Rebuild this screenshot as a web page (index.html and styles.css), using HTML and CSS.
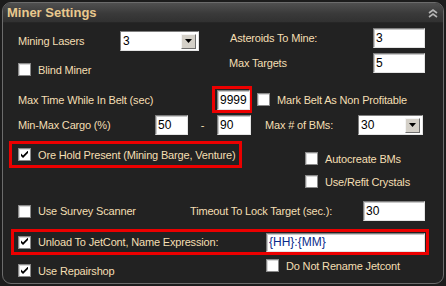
FILE: index.html
```html
<!DOCTYPE html>
<html>

<head>
    <meta charset="utf-8" />
    <title>Miner Settings</title>
    <link rel="stylesheet" href="styles.css">
</head>

<body>
    <div class="panel">
        <div class="head">
            <span class="title">Miner Settings</span>
            <svg class="collapse" width="10" height="9" viewBox="0 0 10 9">
                <path d="M1 4 L5 1 L9 4 M1 8 L5 5 L9 8" fill="none" stroke="#b4b4b4" stroke-width="1.6" />
            </svg>
        </div>

        <div class="top">
            <div class="col-left">
                <div class="row h20">
                    <span class="lbl w-lasers">Mining Lasers</span>
                    <div class="select w-lasers-sel"><span class="val">3</span><span class="drop"></span></div>
                </div>
                <div class="row h17 blind">
                    <span class="box"></span><span class="lbl gap">Blind Miner</span>
                </div>
            </div>
            <div class="col-right">
                <div class="row h19">
                    <span class="lbl w-ast">Asteroids To Mine:</span>
                    <input class="txt w52" value="3">
                </div>
                <div class="row h18 targets">
                    <span class="lbl w-tgt">Max Targets</span>
                    <input class="txt w52" value="5">
                </div>
            </div>
        </div>

        <div class="row maxtime">
            <span class="lbl w-maxtime">Max Time While In Belt (sec)</span>
            <div class="red red-small"><input class="txt w32" value="9999"></div>
            <span class="box mark-box"></span><span class="lbl gap">Mark Belt As Non Profitable</span>
        </div>

        <div class="row cargo">
            <span class="lbl w-cargo">Min-Max Cargo (%)</span>
            <input class="txt w32" value="50">
            <span class="lbl dash">-</span>
            <input class="txt w34" value="90">
            <span class="lbl w-bms">Max # of BMs:</span>
            <div class="select w-bms-sel"><span class="val">30</span><span class="drop"></span></div>
        </div>

        <div class="ore">
            <div class="red red-ore">
                <span class="box checked"></span><span class="lbl gap">Ore Hold Present (Mining Barge, Venture)</span>
            </div>
            <div class="ore-right">
                <div class="row h13"><span class="box"></span><span class="lbl gap">Autocreate BMs</span></div>
                <div class="row h13 refit"><span class="box"></span><span class="lbl gap">Use/Refit Crystals</span></div>
            </div>
        </div>

        <div class="row survey">
            <div class="row w-check-survey"><span class="box"></span><span class="lbl gap">Use Survey Scanner</span></div>
            <span class="lbl w-timeout">Timeout To Lock Target (sec.):</span>
            <input class="txt w62" value="30">
        </div>

        <div class="red red-unload">
            <div class="row w-check-unload"><span class="box checked"></span><span class="lbl gap">Unload To JetCont, Name Expression:</span></div>
            <input class="txt w159 blue" value="{HH}:{MM}">
        </div>

        <div class="row last">
            <div class="row w-check-unload repair"><span class="box checked"></span><span class="lbl gap">Use Repairshop</span></div>
            <div class="row rename"><span class="box"></span><span class="lbl gap">Do Not Rename Jetcont</span></div>
        </div>
    </div>
</body>

</html>
```

FILE: styles.css
```css
/* Khung chung */
body {
    margin: 0;
    background-color: #1c1c1c;
    font-family: "Liberation Sans", Arial, sans-serif;
    font-size: 11px;
}

.panel {
    margin: 2px 0 0 2px;
    width: 440px;
    height: 280px;
    border: 1px solid #6c6c6c;
    border-radius: 9px;
    background-color: #222222;
    overflow: hidden;
}

/* Thanh tiêu đề */
.head {
    height: 19px;
    display: flex;
    align-items: center;
    justify-content: space-between;
    padding: 0 5px 0 4px;
    background: linear-gradient(#505050, #3a3a3a 55%, #313131);
    border-bottom: 1px solid #262626;
}

.title {
    color: #e9c98e;
    font-weight: bold;
    font-size: 13px;
}

.collapse {
    margin-top: 1px;
}

/* Hàng và nhãn */
.row {
    display: flex;
    align-items: center;
}

.lbl {
    color: #f4dfb3;
    white-space: nowrap;
    letter-spacing: -0.17px;
}

.gap {
    margin-left: 7px;
}

.h20 { height: 20px; }
.h19 { height: 19px; }
.h18 { height: 18px; }
.h17 { height: 17px; }
.h13 { height: 13px; }

/* Ô checkbox */
.box {
    width: 11px;
    height: 11px;
    flex: none;
    background-color: #fff;
    border: 1px solid #8a8a8a;
    box-shadow: inset 1px 1px 0 #d8d8d8;
    position: relative;
}

.box.checked::after {
    content: "";
    position: absolute;
    left: 2px;
    top: 1px;
    width: 7px;
    height: 8px;
    background: url("data:image/svg+xml;utf8,<svg xmlns='http://www.w3.org/2000/svg' width='7' height='7' viewBox='0 0 7 7'><path d='M0 2.5 L0 5 L2 7 L7 2 L7 -0.5 L2 4.5 Z' fill='black'/></svg>") no-repeat center;
}

/* Ô nhập */
.txt {
    box-sizing: border-box;
    height: 20px;
    margin: 0;
    padding: 0 0 0 2px;
    border: 1px solid;
    border-color: #7e7e7e #e4e4e4 #e4e4e4 #7e7e7e;
    box-shadow: inset 1px 1px 0 #c8c8c8;
    background-color: #fff;
    color: #000;
    font-family: "Liberation Sans", Arial, sans-serif;
    font-size: 12px;
    outline: none;
}

.blue { color: #0a2a8a; }

.w32 { width: 33px; }
.w34 { width: 34px; }
.w52 { width: 52px; }
.w62 { width: 62px; }
.w159 { width: 159px; height: 19px; }

/* Hộp chọn */
.select {
    box-sizing: border-box;
    height: 20px;
    display: flex;
    align-items: center;
    justify-content: space-between;
    padding: 0 2px 0 2px;
    background-color: #fff;
    border: 1px solid;
    border-color: #7e7e7e #e4e4e4 #e4e4e4 #7e7e7e;
    font-size: 12px;
}

.val {
    color: #000;
}

.drop {
    width: 15px;
    height: 15px;
    box-sizing: border-box;
    background: #d4d0c8 url("data:image/svg+xml;utf8,<svg xmlns='http://www.w3.org/2000/svg' width='7' height='4' viewBox='0 0 7 4'><path d='M0 0 H7 L3.5 4 Z' fill='black'/></svg>") no-repeat center;
    border: 1px solid;
    border-color: #f4f4f4 #6e6e6e #6e6e6e #f4f4f4;
}

.w-lasers-sel { width: 79px; }
.w-bms-sel { width: 65px; }

/* Khu trên cùng */
.top {
    display: flex;
    padding-top: 5px;
    height: 50px;
}

.col-left {
    width: 212px;
    padding: 3px 0 0 15px;
}

.w-lasers { width: 102px; }

.blind {
    margin-top: 10px;
}

.w-ast { width: 143px; }

.targets {
    margin-top: 7px;
    margin-left: -1px;
}

.w-tgt { width: 144px; }

/* Khung đỏ */
.red {
    border: 3px solid #ec0000;
    box-sizing: border-box;
}

.maxtime {
    margin-top: 8px;
    padding-left: 15px;
    height: 27px;
}

.w-maxtime { width: 194px; }

.red-small {
    width: 40px;
    height: 27px;
    padding: 1px 0 0 2px;
}

.mark-box {
    margin-left: 5px;
}

.cargo {
    margin-top: 2px;
    padding-left: 15px;
    height: 20px;
}

.w-cargo { width: 137px; }

.dash {
    width: 29px;
    text-align: center;
}

.w-bms {
    width: 93px;
    margin-left: 14px;
}

/* Khu Ore Hold */
.ore {
    display: flex;
    margin-top: 6px;
    height: 47px;
}

.red-ore {
    display: flex;
    align-items: center;
    margin-left: 6px;
    width: 233px;
    height: 27px;
    padding-left: 6px;
}

.ore-right {
    margin-left: 63px;
    padding-top: 11px;
}

.refit {
    margin-top: 10px;
}

.survey {
    margin-top: 13px;
    padding-left: 15px;
    height: 20px;
}

.w-check-survey { width: 172px; }
.w-timeout { width: 173px; }

.red-unload {
    display: flex;
    align-items: center;
    margin: 8px 0 0 8px;
    width: 418px;
    height: 26px;
    padding-left: 4px;
}

.w-check-unload { width: 248px; }

.last {
    margin-top: 4px;
    padding-left: 15px;
    height: 18px;
    align-items: stretch;
}

.repair {
    align-self: flex-end;
    height: 13px;
}

.rename {
    align-self: flex-start;
    height: 13px;
}
```
